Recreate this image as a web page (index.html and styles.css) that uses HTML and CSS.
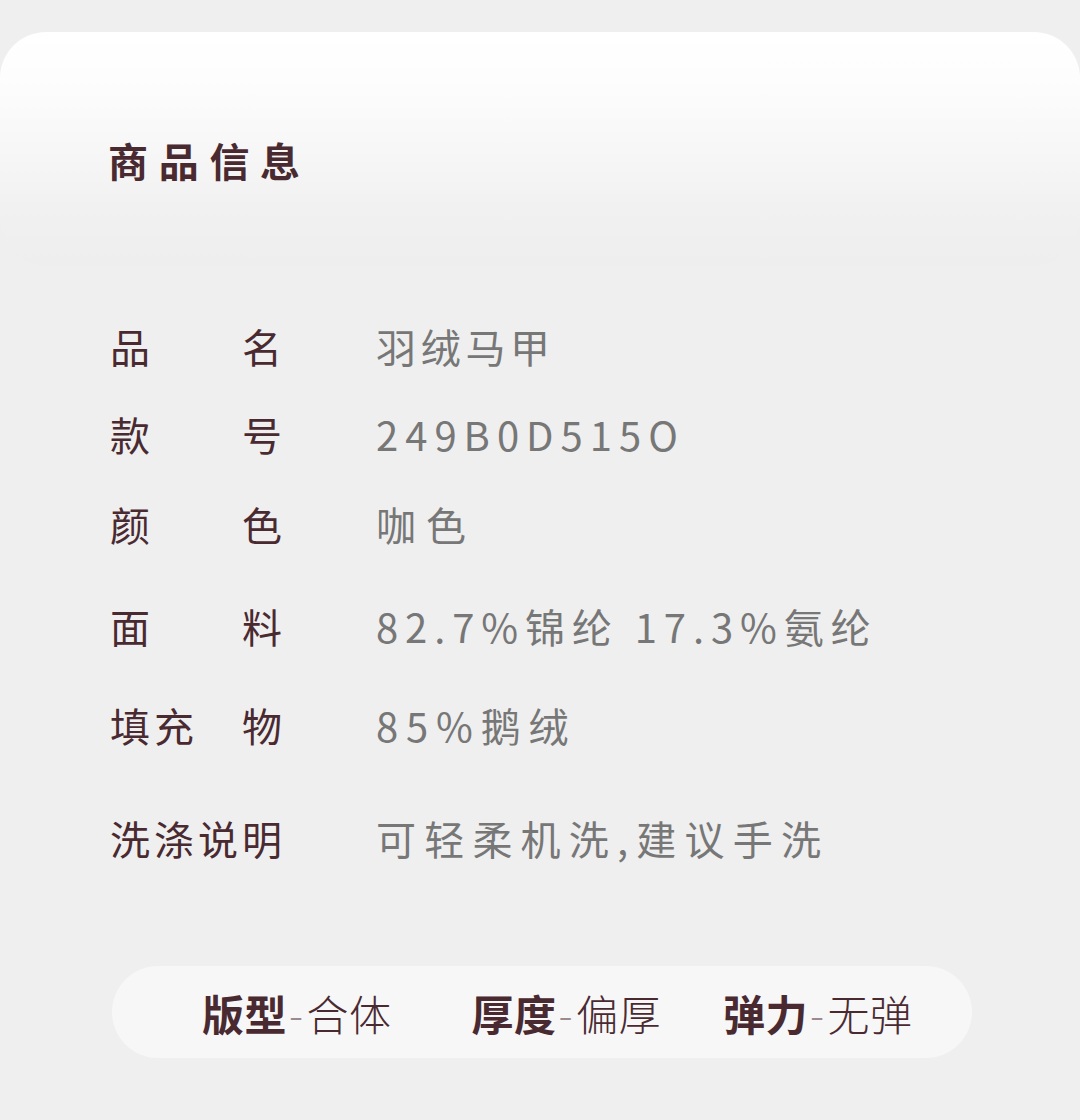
FILE: index.html
```html
<!DOCTYPE html>
<html lang="zh-CN">
<head>
<meta charset="utf-8">
<title>商品信息</title>
<link rel="stylesheet" href="styles.css">
</head>
<body>
<div class="page">
  <header class="head-card">
    <h1 class="title">商品信息</h1>
  </header>
  <section class="info">
    <div class="row row-name"><span class="label">品　　名</span><span class="value">羽绒马甲</span></div>
    <div class="row row-sku"><span class="label">款　　号</span><span class="value">249B0D515O</span></div>
    <div class="row row-color"><span class="label">颜　　色</span><span class="value">咖色</span></div>
    <div class="row row-fabric"><span class="label">面　　料</span><span class="value">82.7%锦纶 17.3%氨纶</span></div>
    <div class="row row-fill"><span class="label">填充　物</span><span class="value">85%鹅绒</span></div>
    <div class="row row-wash"><span class="label">洗涤说明</span><span class="value">可轻柔机洗,建议手洗</span></div>
  </section>
  <div class="traits">
    <span class="trait trait-fit"><b>版型</b><span class="dash">-</span><span class="val">合体</span></span>
    <span class="trait trait-thick"><b>厚度</b><span class="dash">-</span><span class="val">偏厚</span></span>
    <span class="trait trait-stretch"><b>弹力</b><span class="dash">-</span><span class="val">无弹</span></span>
  </div>
</div>
</body>
</html>
```
FILE: styles.css
```css
html, body {
  margin: 0;
  padding: 0;
  background: #efefef;
}
body {
  font-family: "Noto Sans CJK SC", "Noto Sans", sans-serif;
  color: #4a2a31;
}
.page {
  width: 1080px;
  height: 1120px;
  padding-top: 32px;
  box-sizing: border-box;
  overflow: hidden;
}
.head-card {
  height: 234px;
  border-radius: 46px;
  background: linear-gradient(180deg, #ffffff 0%, #fdfdfd 20%, #f8f8f8 45%, #f1f1f1 75%, #eeeeee 100%);
  padding: 100px 0 0 108px;
  box-sizing: border-box;
}
.title {
  margin: 0;
  font-size: 40px;
  font-weight: 700;
  letter-spacing: 10.7px;
  line-height: 56px;
  color: #4a2a31;
}
.info {
  padding: 50px 0 0 110px;
}
.row {
  display: grid;
  grid-template-columns: 266px 1fr;
  align-items: center;
  height: 60px;
  font-size: 40px;
  line-height: 60px;
}
.label {
  letter-spacing: 4px;
  white-space: pre;
  color: #4a2a31;
}
.value {
  color: #777777;
  letter-spacing: 8px;
}
.row-name .value { letter-spacing: 4.7px; }
.row-sku .value { letter-spacing: 7px; }
.row-color .value { letter-spacing: 10px; }
.row-fabric .value { letter-spacing: 6.9px; }
.row-fill .value { letter-spacing: 7.8px; }
.row-wash .value { letter-spacing: 8.2px; }
.row-sku { margin-top: 28px; }
.row-color { margin-top: 30px; }
.row-fabric { margin-top: 42px; }
.row-fill { margin-top: 39px; }
.row-wash { margin-top: 53px; }
.traits {
  margin: 98px 0 0 112px;
  width: 860px;
  height: 92px;
  border-radius: 46px;
  background: #f7f7f7;
  display: flex;
  align-items: center;
  padding-left: 90px;
  box-sizing: border-box;
  font-size: 42px;
}
.trait {
  display: inline-flex;
  align-items: center;
  white-space: nowrap;
  letter-spacing: 0.5px;
}
.trait-thick { margin-left: 80px; }
.trait-stretch { margin-left: 62px; }
.trait b {
  font-weight: 700;
  color: #4a2a31;
}
.dash {
  color: #9c8a8e;
  font-weight: 300;
  margin: 0 3px 0 2px;
}
.val {
  font-weight: 300;
  color: #4a2a31;
}
```
